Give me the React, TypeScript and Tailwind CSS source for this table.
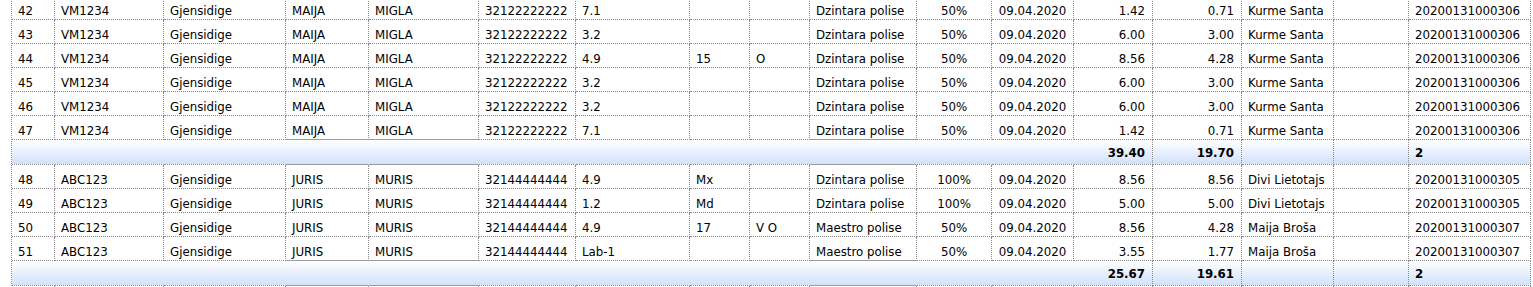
type Align = 'l' | 'c' | 'r';

type DataRow = { kind: 'data'; cells: string[]; edge?: boolean };
type TotalRow = { kind: 'total'; sum: string; half: string; count: string };

// column widths include the right dotted border
const align: Align[] = ['l', 'l', 'l', 'l', 'l', 'l', 'l', 'l', 'l', 'l', 'c', 'c', 'r', 'r', 'l', 'l', 'l'];

const alignClass: Record<Align, string> = {
  l: 'justify-start pl-[6px]',
  c: 'justify-center',
  r: 'justify-end pr-[7px]',
};

// columns that get a solid rule above and below the total rows
const solidCols = [3, 4, 9];

const maija = (n: string, dose: string, a: string, b: string, sum: string, half: string, edge = false): DataRow => ({
  kind: 'data',
  edge,
  cells: [n, 'VM1234', 'Gjensidige', 'MAIJA', 'MIGLA', '32122222222', dose, a, b, 'Dzintara polise', '50%', '09.04.2020', sum, half, 'Kurme Santa', '', '20200131000306'],
});

const rows: (DataRow | TotalRow)[] = [
  maija('42', '7.1', '', '', '1.42', '0.71'),
  maija('43', '3.2', '', '', '6.00', '3.00'),
  maija('44', '4.9', '15', 'O', '8.56', '4.28'),
  maija('45', '3.2', '', '', '6.00', '3.00'),
  maija('46', '3.2', '', '', '6.00', '3.00'),
  maija('47', '7.1', '', '', '1.42', '0.71', true),
  { kind: 'total', sum: '39.40', half: '19.70', count: '2' },
  {
    kind: 'data',
    cells: ['48', 'ABC123', 'Gjensidige', 'JURIS', 'MURIS', '32144444444', '4.9', 'Mx', '', 'Dzintara polise', '100%', '09.04.2020', '8.56', '8.56', 'Divi Lietotajs', '', '20200131000305'],
  },
  {
    kind: 'data',
    cells: ['49', 'ABC123', 'Gjensidige', 'JURIS', 'MURIS', '32144444444', '1.2', 'Md', '', 'Dzintara polise', '100%', '09.04.2020', '5.00', '5.00', 'Divi Lietotajs', '', '20200131000305'],
  },
  {
    kind: 'data',
    cells: ['50', 'ABC123', 'Gjensidige', 'JURIS', 'MURIS', '32144444444', '4.9', '17', 'V O', 'Maestro polise', '50%', '09.04.2020', '8.56', '4.28', 'Maija Broša', '', '20200131000307'],
  },
  {
    kind: 'data',
    edge: true,
    cells: ['51', 'ABC123', 'Gjensidige', 'JURIS', 'MURIS', '32144444444', 'Lab-1', '', '', 'Maestro polise', '50%', '09.04.2020', '3.55', '1.77', 'Maija Broša', '', '20200131000307'],
  },
  { kind: 'total', sum: '25.67', half: '19.61', count: '2' },
  { kind: 'data', cells: Array(17).fill('') },
];

function DataCells({ row }: { row: DataRow }) {
  return (
    <>
      {row.cells.map((text, i) => (
        <div
          key={i}
          className={`flex h-[24px] items-start overflow-hidden whitespace-nowrap border-r border-b border-dotted border-[#8a8a8a] pt-[8px] leading-[14px] ${alignClass[align[i]]} ${
            row.edge && solidCols.includes(i) ? '[border-bottom-style:solid] border-b-[#9c9c9c]' : ''
          }`}
        >
          {text}
        </div>
      ))}
    </>
  );
}

function TotalCells({ row }: { row: TotalRow }) {
  return (
    <>
      {align.map((_, i) => {
        const text = i === 12 ? row.sum : i === 13 ? row.half : i === 16 ? row.count : '';
        return (
          <div
            key={i}
            className={`flex h-[25px] items-start overflow-hidden whitespace-nowrap border-r border-b border-dotted border-[#8a8a8a] bg-linear-to-b from-white to-[#d2e1fa] pt-[6px] font-bold leading-[14px] ${alignClass[align[i]]} ${
              i < 12 ? 'border-r-transparent' : ''
            } ${solidCols.includes(i) ? '[border-bottom-style:solid] border-b-[#9c9c9c]' : ''}`}
          >
            {text}
          </div>
        );
      })}
    </>
  );
}

export default function App() {
  return (
    <div className="h-[287px] w-[1533px] overflow-hidden bg-white font-['DejaVu_Sans',sans-serif] text-[11.8px] text-black">
      <div className="-mt-[4px] ml-[11px] grid w-max grid-cols-[43px_109px_122px_83px_110px_97px_114px_60px_60px_107px_75px_82px_79px_89px_92px_75px_122px] border-l border-dotted border-[#8a8a8a]">
        {rows.map((row, i) =>
          row.kind === 'data' ? <DataCells key={i} row={row} /> : <TotalCells key={i} row={row} />,
        )}
      </div>
    </div>
  );
}
